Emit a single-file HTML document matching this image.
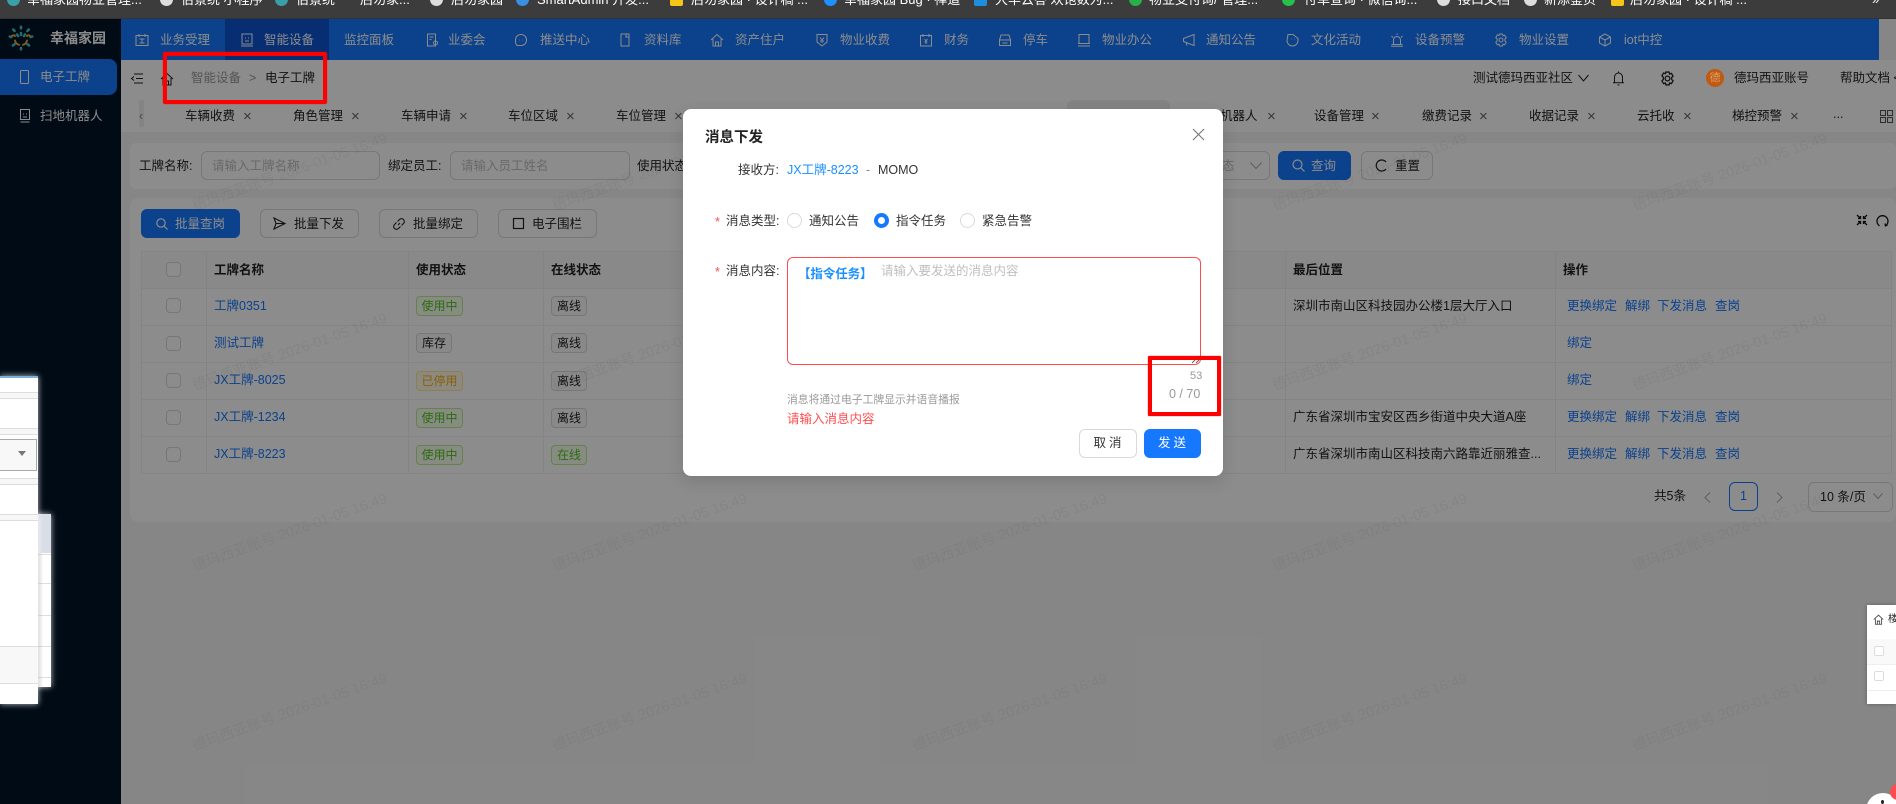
<!DOCTYPE html>
<html lang="zh-CN">
<head>
<meta charset="utf-8">
<title>消息下发</title>
<style>
html,body{margin:0;padding:0;width:1896px;height:804px;overflow:hidden;background:#f5f5f5}
body{position:relative;font-family:"Liberation Sans","Noto Sans CJK SC",sans-serif;font-size:12.5px;color:rgba(0,0,0,.88);filter:blur(.3px)}
.a,.t{position:absolute}
.t{white-space:nowrap;line-height:20px;height:20px}
svg{position:absolute;overflow:visible;fill:none}
.nav .t{color:#fff;top:30px}
.nav svg{top:33px;width:14px;height:14px;stroke:#fff;stroke-width:1}
.bm .t{color:#fff;top:-10px;font-size:13px}
.bm i{position:absolute;top:-7px;width:13px;height:13px;border-radius:50%;background:#ddd}
.tab .t{top:106px;color:rgba(0,0,0,.88)}
.tab .x{color:#666;font-size:15px;top:107px}
.btn{position:absolute;box-sizing:border-box;border:1px solid #d9d9d9;border-radius:6px;background:#fff}
.pri{background:#1677ff;border-color:#1677ff}
.inp{position:absolute;box-sizing:border-box;border:1px solid #d9d9d9;border-radius:6px;background:#fff;top:151px;height:29px}
.hl{position:absolute;left:141px;width:1750px;height:1px;background:#f0f0f0}
.vl{position:absolute;top:251px;height:222px;width:1px;background:#f0f0f0}
.cb{position:absolute;left:166px;width:13px;height:13px;border:1px solid #d9d9d9;border-radius:4px;background:#fff}
.link{color:#1677ff}
.tag{position:absolute;box-sizing:border-box;height:20px;line-height:18px;border:1px solid #d9d9d9;background:#fafafa;border-radius:4px;text-align:center;font-size:12px;color:rgba(0,0,0,.88)}
.g{background:#f6ffed;border-color:#b7eb8f;color:#52c41a}
.o{background:#fffbe6;border-color:#ffe58f;color:#faad14}
.wm{position:absolute;white-space:nowrap;font-size:14.5px;line-height:18px;color:rgba(0,0,0,.055);transform-origin:0 50%;transform:rotate(-19.5deg)}
.b{font-weight:700}
.radio{position:absolute;box-sizing:border-box;top:213px;width:15px;height:15px;border:1px solid #d9d9d9;border-radius:50%;background:#fff}
</style>
</head>
<body>

<!-- bookmarks bar -->
<div class="a bm" style="left:0;top:0;width:1896px;height:18px;background:#3c3c3c;border-bottom:1px solid #333;overflow:hidden">
  <i style="left:7px;background:#3aa0a8"></i><div class="t" style="left:27px">幸福家园物业管理...</div>
  <i style="left:160px"></i><div class="t" style="left:181px">伯景统 小程序</div>
  <i style="left:275px;background:#3aa0a8"></i><div class="t" style="left:296px">伯景统</div>
  <div class="t" style="left:360px">后勿家...</div>
  <i style="left:430px"></i><div class="t" style="left:451px">后勿家园</div>
  <i style="left:516px;background:#3a8fe0"></i><div class="t" style="left:537px">SmartAdmin 开发...</div>
  <i style="left:670px;background:#f5c518;border-radius:2px"></i><div class="t" style="left:691px">后勿家园 · 设计稿 ...</div>
  <i style="left:824px;background:#1e90ff"></i><div class="t" style="left:844px">幸福家园 Bug · 禅道</div>
  <i style="left:974px;background:#1e8fe0;border-radius:2px"></i><div class="t" style="left:995px">大羊云答 欢饱数为...</div>
  <i style="left:1129px;background:#27b04a"></i><div class="t" style="left:1149px">物业支付询/ 管理...</div>
  <i style="left:1282px;background:#27c04a"></i><div class="t" style="left:1304px">付单查询 · 微信询...</div>
  <i style="left:1437px"></i><div class="t" style="left:1458px">接口文档</div>
  <i style="left:1524px"></i><div class="t" style="left:1544px">新添鉴页</div>
  <i style="left:1611px;background:#f5c518;border-radius:2px"></i><div class="t" style="left:1630px">后勿家园 · 设计稿 ...</div>
  <div class="t" style="left:1872px">»</div>
</div>

<!-- sidebar -->
<div class="a" style="left:0;top:19px;width:121px;height:785px;background:#001529"></div>
<svg style="left:8px;top:25px;width:26px;height:26px" viewBox="0 0 26 26">
  <g stroke="#3fc4c0" stroke-width="2.600" stroke-linecap="round">
    <path d="M13 1.800v1.500M5.200 4.500l1.400 1.400M20.800 4.500l-1.400 1.400M1.800 11.500l1.600.5M24.200 11.500l-1.600.5M5 20.500l1.500-1.300M21 20.500l-1.500-1.300M13 24.200v-1.200"/>
    <path d="M13 8v2M9 9.500l1 1.500M17 9.500l-1 1.500"/>
  </g>
  <path d="M7 15.500c.3 2 2 4 4 4.300M19 15.500c-.3 2-2 4-4 4.300M4 11c1-1 2-1 3 0M22 11c-1-1-2-1-3 0" stroke="#e8a040" stroke-width="2" stroke-linecap="round"/>
</svg>
<div class="t b" style="left:50px;top:28px;color:#fff;font-size:14px">幸福家园</div>
<div class="a" style="left:0;top:59px;width:117px;height:36px;background:#1677ff;border-radius:0 8px 8px 0"></div>
<svg style="left:20px;top:70px;width:9px;height:14px;stroke:#fff" viewBox="0 0 9 14"><rect x=".5" y=".5" width="8" height="13" rx="1"/></svg>
<div class="t" style="left:40px;top:67px;color:#fff">电子工牌</div>
<svg style="left:20px;top:109px;width:10px;height:14px;stroke:#fff" viewBox="0 0 10 14"><rect x=".5" y=".5" width="9" height="10"/><path d="M3 5h1M6 5h1M3 8h4M.5 13h9"/></svg>
<div class="t" style="left:40px;top:106px;color:#fff">扫地机器人</div>

<!-- top nav -->
<div class="nav">
  <div class="a" style="left:121px;top:19px;width:1758px;height:41px;background:#1677ff"></div>
  <div class="a" style="left:225px;top:19px;width:104px;height:41px;background:#0d54d1"></div>
  <svg style="left:135px" viewBox="0 0 14 14"><path d="M1 2.500h12v10H1zM4 1v3M10 1v3M4.500 6h5M7 6v4M4.500 10h5"/></svg>
  <div class="t" style="left:160px">业务受理</div>
  <svg style="left:240px" viewBox="0 0 14 14"><rect x="2" y="1" width="10" height="10"/><path d="M5 5h1M8 5h1M5 8h4M1 13h12"/></svg>
  <div class="t" style="left:264px">智能设备</div>
  <div class="t" style="left:344px">监控面板</div>
  <svg style="left:425px" viewBox="0 0 14 14"><rect x="2.500" y="1" width="8" height="12"/><path d="M4.500 4h4M4.500 6.500h2"/><circle cx="10.500" cy="10" r="2"/></svg>
  <div class="t" style="left:448px">业委会</div>
  <svg style="left:514px" viewBox="0 0 14 14"><path d="M7 1.500c3.500 0 5.500 2.500 5.500 5.500s-2 5.500-5.500 5.500H3l-1-1.500C1.500 10 1.500 8 1.500 7 1.500 4 3.500 1.500 7 1.500zM5 7h.5M8.500 7H9"/></svg>
  <div class="t" style="left:540px">推送中心</div>
  <svg style="left:618px" viewBox="0 0 14 14"><path d="M3 1h8v12H3zM8 1v3h3"/></svg>
  <div class="t" style="left:644px">资料库</div>
  <svg style="left:710px" viewBox="0 0 14 14"><path d="M1 7l6-5.500L13 7M3 6v7h8V6M5.500 13V9h3v4"/></svg>
  <div class="t" style="left:735px">资产住户</div>
  <svg style="left:815px" viewBox="0 0 14 14"><path d="M2 1.500h10V9l-5 4-5-4zM5 4.500l2 2.500 2-2.500M7 7v3M5 8h4"/></svg>
  <div class="t" style="left:840px">物业收费</div>
  <svg style="left:919px" viewBox="0 0 14 14"><rect x="1.500" y="2.500" width="11" height="10.500"/><path d="M4 1v3M10 1v3M5.500 6l1.500 2 1.500-2M7 8v3M5.500 9h3"/></svg>
  <div class="t" style="left:944px">财务</div>
  <svg style="left:998px" viewBox="0 0 14 14"><path d="M3 2h8l1.500 5v5.500h-11V7zM1.500 7h11M4.500 10h5"/></svg>
  <div class="t" style="left:1023px">停车</div>
  <svg style="left:1077px" viewBox="0 0 14 14"><rect x="2" y="1.500" width="10" height="9"/><path d="M1 13h12M1 10.500h12"/></svg>
  <div class="t" style="left:1102px">物业办公</div>
  <svg style="left:1182px" viewBox="0 0 14 14"><path d="M1.500 5.500L12 1.500v11L1.500 8.500zM4 9.500l1 3"/></svg>
  <div class="t" style="left:1206px">通知公告</div>
  <svg style="left:1285px" viewBox="0 0 14 14"><path d="M3 1.500h5l5 4v2c0 3-2.500 5.500-5.500 5.500S2 10.500 2 7.500zM6 6h.5M9 6h.5"/></svg>
  <div class="t" style="left:1311px">文化活动</div>
  <svg style="left:1390px" viewBox="0 0 14 14"><path d="M3.500 11V7a3.500 3.500 0 0 1 7 0v4M1.500 11.500h11M1 13.300h12M1.500 3l1.500 1.500M12.500 3L11 4.500M7 .5v1.500"/></svg>
  <div class="t" style="left:1415px">设备预警</div>
  <svg style="left:1494px" viewBox="0 0 14 14"><path d="M5.500 1h3l.5 1.800 1.700-.6 1.500 2.600-1.300 1.300v1.800l1.300 1.300-1.500 2.600-1.700-.6-.5 1.800h-3l-.5-1.800-1.700.6-1.500-2.600 1.300-1.300V5.800L1.800 4.500l1.500-2.600 1.700.6z"/><circle cx="7" cy="7" r="2"/></svg>
  <div class="t" style="left:1519px">物业设置</div>
  <svg style="left:1598px" viewBox="0 0 14 14"><path d="M7 1l5.500 3v6L7 13l-5.500-3V4zM1.500 4L7 7l5.500-3M7 7v6"/></svg>
  <div class="t" style="left:1624px">iot中控</div>
</div>

<!-- breadcrumb bar -->
<div class="a" style="left:121px;top:60px;width:1775px;height:36px;background:#fff;border-bottom:1px solid #f0f0f0"></div>
<svg style="left:131px;top:73px;width:12px;height:11px;stroke:#222" viewBox="0 0 12 11"><path d="M3 1h9M5 5.500h7M3 10h9M3 3.500L.5 5.500 3 7.500"/></svg>
<svg style="left:160px;top:72px;width:14px;height:14px;stroke:#222" viewBox="0 0 14 14"><path d="M1 7l6-5.500L13 7M3 6v7h8V6M5.500 13V9h3v4"/></svg>
<div class="t" style="left:191px;top:68px;color:#999">智能设备</div>
<div class="t" style="left:249px;top:68px;color:#999">&gt;</div>
<div class="t" style="left:265px;top:68px;color:#222">电子工牌</div>
<div class="t" style="left:1473px;top:68px">测试德玛西亚社区</div>
<svg style="left:1578px;top:74px;width:11px;height:8px;stroke:#222" viewBox="0 0 11 8"><path d="M.5 1l5 6 5-6"/></svg>
<svg style="left:1612px;top:71px;width:13px;height:15px;stroke:#222" viewBox="0 0 13 15"><path d="M2.500 11.500V6a4 4 0 0 1 8 0v5.500M1 11.800h11M5.500 14h2M6.500 2V.5"/></svg>
<svg style="left:1660px;top:71px;width:15px;height:15px;stroke:#222;stroke-width:1.200" viewBox="0 0 14 14"><path d="M5.500 1h3l.5 1.800 1.700-.6 1.500 2.600-1.300 1.300v1.800l1.300 1.300-1.500 2.600-1.700-.6-.5 1.800h-3l-.5-1.800-1.700.6-1.500-2.600 1.300-1.300V5.800L1.800 4.500l1.500-2.600 1.700.6z"/><circle cx="7" cy="7" r="2.200"/></svg>
<div class="t" style="left:1734px;top:68px">德玛西亚账号</div>
<div class="t" style="left:1840px;top:68px;width:56px;overflow:hidden">帮助文档 &lt;</div>

<!-- tabs -->
<div class="a" style="left:121px;top:96px;width:1775px;height:36px;background:#fff"></div>
<div class="a" style="left:139px;top:100px;width:5px;height:27px;background:#f0f0f0"></div>
<div class="t" style="left:139px;top:106px;color:#888">‹</div>
<div class="a" style="left:1067px;top:100px;width:103px;height:32px;background:#efefef;border-radius:6px 6px 0 0"></div>
<div class="tab">
  <div class="t" style="left:185px">车辆收费</div><div class="t x" style="left:243px">×</div>
  <div class="t" style="left:293px">角色管理</div><div class="t x" style="left:351px">×</div>
  <div class="t" style="left:401px">车辆申请</div><div class="t x" style="left:459px">×</div>
  <div class="t" style="left:508px">车位区域</div><div class="t x" style="left:566px">×</div>
  <div class="t" style="left:616px">车位管理</div><div class="t x" style="left:674px">×</div>
  <div class="t" style="left:1220px">机器人</div><div class="t x" style="left:1267px">×</div>
  <div class="t" style="left:1314px">设备管理</div><div class="t x" style="left:1371px">×</div>
  <div class="t" style="left:1422px">缴费记录</div><div class="t x" style="left:1479px">×</div>
  <div class="t" style="left:1529px">收据记录</div><div class="t x" style="left:1587px">×</div>
  <div class="t" style="left:1637px">云托收</div><div class="t x" style="left:1683px">×</div>
  <div class="t" style="left:1732px">梯控预警</div><div class="t x" style="left:1790px">×</div>
  <div class="t" style="left:1833px;top:104px">...</div>
</div>
<svg style="left:1880px;top:110px;width:13px;height:13px;stroke:#555" viewBox="0 0 13 13"><rect x=".5" y=".5" width="5" height="5"/><rect x="7.500" y=".5" width="5" height="5"/><rect x=".5" y="7.500" width="5" height="5"/><rect x="7.500" y="7.500" width="5" height="5"/></svg>

<!-- search card -->
<div class="a" style="left:130px;top:143px;width:1766px;height:46px;background:#fff;border-radius:6px"></div>
<div class="t" style="left:139px;top:156px">工牌名称:</div>
<div class="inp" style="left:201px;width:179px"></div>
<div class="t" style="left:212px;top:156px;color:#bfbfbf">请输入工牌名称</div>
<div class="t" style="left:388px;top:156px">绑定员工:</div>
<div class="inp" style="left:450px;width:180px"></div>
<div class="t" style="left:461px;top:156px;color:#bfbfbf">请输入员工姓名</div>
<div class="t" style="left:637px;top:156px">使用状态:</div>
<div class="inp" style="left:1000px;width:270px"></div>
<div class="t" style="left:1222px;top:156px;color:#bfbfbf">态</div>
<svg style="left:1250px;top:162px;width:12px;height:7px;stroke:#aaa" viewBox="0 0 12 7"><path d="M.5.5L6 6.500 11.500.5"/></svg>
<div class="btn pri" style="left:1278px;top:151px;width:73px;height:29px"></div>
<svg style="left:1292px;top:159px;width:13px;height:13px;stroke:#fff;stroke-width:1.200" viewBox="0 0 13 13"><circle cx="5.500" cy="5.500" r="4.500"/><path d="M9 9l3.500 3.500"/></svg>
<div class="t" style="left:1311px;top:156px;color:#fff">查询</div>
<div class="btn" style="left:1361px;top:151px;width:72px;height:29px"></div>
<svg style="left:1375px;top:159px;width:12px;height:13px;stroke:#222;stroke-width:1.200" viewBox="0 0 12 13"><path d="M11 3a5.500 5.500 0 1 0 0 7"/></svg>
<div class="t" style="left:1395px;top:156px">重置</div>

<!-- table card -->
<div class="a" style="left:130px;top:198px;width:1766px;height:324px;background:#fff;border-radius:8px"></div>
<div class="btn pri" style="left:141px;top:209px;width:99px;height:29px"></div>
<svg style="left:156px;top:218px;width:12px;height:12px;stroke:#fff;stroke-width:1.200" viewBox="0 0 12 12"><circle cx="5" cy="5" r="4.200"/><path d="M8 8l3.500 3.500"/></svg>
<div class="t" style="left:175px;top:214px;color:#fff">批量查岗</div>
<div class="btn" style="left:260px;top:209px;width:99px;height:29px"></div>
<svg style="left:273px;top:217px;width:13px;height:13px;stroke:#222;stroke-width:1.100" viewBox="0 0 13 13"><path d="M1 1l11 5.500L1 12l2-5.500zM3 6.500h9"/></svg>
<div class="t" style="left:294px;top:214px">批量下发</div>
<div class="btn" style="left:379px;top:209px;width:99px;height:29px"></div>
<svg style="left:393px;top:218px;width:12px;height:12px;stroke:#222;stroke-width:1.100" viewBox="0 0 12 12"><path d="M5 7l2-2M4.500 3.500l2-2a2.500 2.500 0 0 1 4 4l-2 2M7.500 8.500l-2 2a2.500 2.500 0 0 1-4-4l2-2"/></svg>
<div class="t" style="left:413px;top:214px">批量绑定</div>
<div class="btn" style="left:498px;top:209px;width:99px;height:29px"></div>
<svg style="left:513px;top:218px;width:11px;height:11px;stroke:#222;stroke-width:1.200" viewBox="0 0 11 11"><rect x=".5" y=".5" width="10" height="10"/></svg>
<div class="t" style="left:532px;top:214px">电子围栏</div>
<svg style="left:1856px;top:214px;width:12px;height:12px;stroke:#111;stroke-width:1.300" viewBox="0 0 12 12"><path d="M1 1l3 3M11 1L8 4M1 11l3-3M11 11L8 8M4.500 2v2.500H2M7.500 2v2.500H10M4.500 10V7.500H2M7.500 10V7.500H10"/></svg>
<svg style="left:1876px;top:214px;width:13px;height:13px;stroke:#111;stroke-width:1.300" viewBox="0 0 13 13"><path d="M3.500 11.800A5.500 5.500 0 1 1 9.500 11.800M9 9.500l.5 2.300 2-.8"/></svg>

<!-- table -->
<div class="a" style="left:141px;top:251px;width:1750px;height:37px;background:#fafafa;border-radius:8px 8px 0 0"></div>
<div class="hl" style="top:251px"></div><div class="hl" style="top:288px"></div><div class="hl" style="top:325px"></div><div class="hl" style="top:362px"></div><div class="hl" style="top:399px"></div><div class="hl" style="top:436px"></div><div class="hl" style="top:473px"></div>
<div class="vl" style="left:141px"></div><div class="vl" style="left:206px"></div><div class="vl" style="left:408px"></div><div class="vl" style="left:543px"></div><div class="vl" style="left:1285px"></div><div class="vl" style="left:1555px"></div><div class="vl" style="left:1891px"></div>
<div class="cb" style="top:262px"></div><div class="cb" style="top:298px"></div><div class="cb" style="top:336px"></div><div class="cb" style="top:373px"></div><div class="cb" style="top:410px"></div><div class="cb" style="top:447px"></div>
<div class="t b" style="left:214px;top:260px">工牌名称</div>
<div class="t b" style="left:416px;top:260px">使用状态</div>
<div class="t b" style="left:551px;top:260px">在线状态</div>
<div class="t b" style="left:1293px;top:260px">最后位置</div>
<div class="t b" style="left:1563px;top:260px">操作</div>

<div class="t link" style="left:214px;top:296px">工牌0351</div>
<div class="t link" style="left:214px;top:333px">测试工牌</div>
<div class="t link" style="left:214px;top:370px">JX工牌-8025</div>
<div class="t link" style="left:214px;top:407px">JX工牌-1234</div>
<div class="t link" style="left:214px;top:444px">JX工牌-8223</div>

<div class="tag g" style="left:416px;top:296px;width:47px">使用中</div>
<div class="tag" style="left:416px;top:333px;width:36px">库存</div>
<div class="tag o" style="left:416px;top:371px;width:47px">已停用</div>
<div class="tag g" style="left:416px;top:408px;width:47px">使用中</div>
<div class="tag g" style="left:416px;top:445px;width:47px">使用中</div>

<div class="tag" style="left:551px;top:296px;width:36px">离线</div>
<div class="tag" style="left:551px;top:333px;width:36px">离线</div>
<div class="tag" style="left:551px;top:371px;width:36px">离线</div>
<div class="tag" style="left:551px;top:408px;width:36px">离线</div>
<div class="tag g" style="left:551px;top:445px;width:36px">在线</div>

<div class="t" style="left:1293px;top:296px">深圳市南山区科技园办公楼1层大厅入口</div>
<div class="t" style="left:1293px;top:407px">广东省深圳市宝安区西乡街道中央大道A座</div>
<div class="t" style="left:1293px;top:444px">广东省深圳市南山区科技南六路靠近丽雅查...</div>

<div class="t link" style="left:1567px;top:296px">更换绑定</div><div class="t link" style="left:1625px;top:296px">解绑</div><div class="t link" style="left:1657px;top:296px">下发消息</div><div class="t link" style="left:1715px;top:296px">查岗</div>
<div class="t link" style="left:1567px;top:333px">绑定</div>
<div class="t link" style="left:1567px;top:370px">绑定</div>
<div class="t link" style="left:1567px;top:407px">更换绑定</div><div class="t link" style="left:1625px;top:407px">解绑</div><div class="t link" style="left:1657px;top:407px">下发消息</div><div class="t link" style="left:1715px;top:407px">查岗</div>
<div class="t link" style="left:1567px;top:444px">更换绑定</div><div class="t link" style="left:1625px;top:444px">解绑</div><div class="t link" style="left:1657px;top:444px">下发消息</div><div class="t link" style="left:1715px;top:444px">查岗</div>

<!-- pagination -->
<div class="t" style="left:1654px;top:486px">共5条</div>
<svg style="left:1704px;top:492px;width:7px;height:11px;stroke:#aaa" viewBox="0 0 7 11"><path d="M6 .5L1 5.500l5 5"/></svg>
<div class="a" style="left:1729px;top:482px;width:27px;height:27px;border:1px solid #1677ff;border-radius:6px;color:#1677ff;text-align:center;line-height:27px">1</div>
<svg style="left:1776px;top:492px;width:7px;height:11px;stroke:#aaa" viewBox="0 0 7 11"><path d="M1 .5l5 5-5 5"/></svg>
<div class="a" style="left:1808px;top:482px;width:83px;height:28px;border:1px solid #d9d9d9;border-radius:6px;background:#fff"></div>
<div class="t" style="left:1820px;top:487px">10 条/页</div>
<svg style="left:1873px;top:493px;width:10px;height:6px;stroke:#aaa" viewBox="0 0 10 6"><path d="M.5.500L5 5.500 9.500.5"/></svg>

<!-- watermarks -->
<div class="wm" style="left:193px;top:198px">德玛西亚账号 2026-01-05 16:49</div>
<div class="wm" style="left:553px;top:198px">德玛西亚账号 2026-01-05 16:49</div>
<div class="wm" style="left:913px;top:198px">德玛西亚账号 2026-01-05 16:49</div>
<div class="wm" style="left:1273px;top:198px">德玛西亚账号 2026-01-05 16:49</div>
<div class="wm" style="left:1633px;top:198px">德玛西亚账号 2026-01-05 16:49</div>
<div class="wm" style="left:193px;top:378px">德玛西亚账号 2026-01-05 16:49</div>
<div class="wm" style="left:553px;top:378px">德玛西亚账号 2026-01-05 16:49</div>
<div class="wm" style="left:913px;top:378px">德玛西亚账号 2026-01-05 16:49</div>
<div class="wm" style="left:1273px;top:378px">德玛西亚账号 2026-01-05 16:49</div>
<div class="wm" style="left:1633px;top:378px">德玛西亚账号 2026-01-05 16:49</div>
<div class="wm" style="left:193px;top:558px">德玛西亚账号 2026-01-05 16:49</div>
<div class="wm" style="left:553px;top:558px">德玛西亚账号 2026-01-05 16:49</div>
<div class="wm" style="left:913px;top:558px">德玛西亚账号 2026-01-05 16:49</div>
<div class="wm" style="left:1273px;top:558px">德玛西亚账号 2026-01-05 16:49</div>
<div class="wm" style="left:1633px;top:558px">德玛西亚账号 2026-01-05 16:49</div>
<div class="wm" style="left:193px;top:738px">德玛西亚账号 2026-01-05 16:49</div>
<div class="wm" style="left:553px;top:738px">德玛西亚账号 2026-01-05 16:49</div>
<div class="wm" style="left:913px;top:738px">德玛西亚账号 2026-01-05 16:49</div>
<div class="wm" style="left:1273px;top:738px">德玛西亚账号 2026-01-05 16:49</div>
<div class="wm" style="left:1633px;top:738px">德玛西亚账号 2026-01-05 16:49</div>

<!-- modal mask -->
<div class="a" style="left:0;top:19px;width:1896px;height:785px;background:rgba(0,0,0,.45)"></div>

<!-- avatar keeps its saturated tone over the mask -->
<div class="a" style="left:1706px;top:69px;width:18px;height:18px;border-radius:50%;background:#bf5a10;color:#d9a070;font-size:11px;line-height:18px;text-align:center">德</div>

<!-- red annotation 1 -->
<div class="a" style="left:163px;top:52px;width:156px;height:44px;border:4px solid #f00;border-radius:2px;box-shadow:0 0 1px #f00"></div>

<!-- modal -->
<div class="a" style="left:683px;top:109px;width:540px;height:367px;background:#fff;border-radius:8px;box-shadow:0 6px 16px rgba(0,0,0,.12)"></div>
<div class="t b" style="left:705px;top:128px;font-size:14.5px;color:#222">消息下发</div>
<svg style="left:1192px;top:128px;width:13px;height:13px;stroke:#777;stroke-width:1.100" viewBox="0 0 13 13"><path d="M1 1l11 11M12 1L1 12"/></svg>
<div class="t" style="left:738px;top:160px;color:#333">接收方:</div>
<div class="t" style="left:787px;top:160px;color:#1890ff">JX工牌-8223</div>
<div class="t" style="left:866px;top:160px;color:#888">-</div>
<div class="t" style="left:878px;top:160px;color:#333">MOMO</div>

<div class="t" style="left:715px;top:212px;color:#ff4d4f">*</div>
<div class="t" style="left:726px;top:211px;color:#333">消息类型:</div>
<div class="radio" style="left:787px"></div>
<div class="t" style="left:809px;top:211px;color:#333">通知公告</div>
<div class="radio" style="left:874px;border:4.500px solid #1677ff"></div>
<div class="t" style="left:896px;top:211px;color:#333">指令任务</div>
<div class="radio" style="left:960px"></div>
<div class="t" style="left:982px;top:211px;color:#333">紧急告警</div>

<div class="t" style="left:715px;top:262px;color:#ff4d4f">*</div>
<div class="t" style="left:726px;top:261px;color:#333">消息内容:</div>
<div class="a" style="left:787px;top:257px;width:412px;height:106px;border:1px solid #ff4d4f;border-radius:6px"></div>
<div class="t" style="left:798px;top:264px;color:#1890ff;font-weight:600;letter-spacing:-.1px">【指令任务】</div>
<div class="t" style="left:881px;top:261px;color:#bfbfbf">请输入要发送的消息内容</div>
<svg style="left:1191px;top:355px;width:9px;height:9px;stroke:#666" viewBox="0 0 9 9"><path d="M1 8l7-7M5 8l3-3"/></svg>
<div class="t" style="left:1190px;top:366px;font-size:11px;color:#999">53</div>
<div class="t" style="left:1169px;top:384px;font-size:12.500px;color:#999">0 / 70</div>
<div class="t" style="left:787px;top:390px;font-size:10.800px;color:#999">消息将通过电子工牌显示并语音播报</div>
<div class="t" style="left:787px;top:409px;color:#ff4d4f">请输入消息内容</div>

<!-- red annotation 2 -->
<div class="a" style="left:1148px;top:356px;width:65px;height:52px;border:4px solid #f00;border-radius:1px;box-shadow:0 0 1px #f00"></div>

<div class="btn" style="left:1079px;top:429px;width:58px;height:29px;text-align:center;line-height:27px;color:#333;letter-spacing:3px;text-indent:2px">取消</div>
<div class="btn pri" style="left:1144px;top:429px;width:57px;height:29px;text-align:center;line-height:27px;color:#fff;letter-spacing:3px;text-indent:2px">发送</div>

<!-- left overlapping windows -->
<div class="a" style="left:0;top:514px;width:51px;height:173px;background:#fff;box-shadow:0 0 6px rgba(255,255,255,.75);overflow:hidden">
  <div class="a" style="left:38px;top:0;width:13px;height:39px;background:#d8dde6"></div>
  <div class="a" style="left:38px;top:40px;width:13px;height:1px;background:#ddd"></div>
  <div class="a" style="left:38px;top:69px;width:13px;height:1px;background:#ddd"></div>
  <div class="a" style="left:38px;top:101px;width:13px;height:1px;background:#ddd"></div>
  <div class="a" style="left:38px;top:132px;width:13px;height:1px;background:#ddd"></div>
  <div class="a" style="left:38px;top:163px;width:13px;height:1px;background:#ddd"></div>
  <div class="a" style="left:38px;top:39px;width:5px;height:134px;background:linear-gradient(90deg,rgba(0,0,0,.18),rgba(0,0,0,0))"></div>
</div>
<div class="a" style="left:0;top:376px;width:38px;height:328px;background:#fff;box-shadow:0 0 6px rgba(255,255,255,.75);overflow:hidden">
  <div class="a" style="left:0;top:0;width:38px;height:2px;background:#7ab0dc"></div>
  <div class="a" style="left:0;top:16px;width:38px;height:5px;background:#f7f7f7;border-top:1px solid #ddd;border-bottom:1px solid #ddd"></div>
  <div class="a" style="left:0;top:52px;width:38px;height:5px;background:#f7f7f7;border-top:1px solid #ddd;border-bottom:1px solid #ddd"></div>
  <div class="a" style="left:-2px;top:63px;width:37px;height:30px;background:#f8f8f8;border:1px solid #aaa"></div>
  <div class="a" style="left:18px;top:75px;width:0;height:0;border:4px solid transparent;border-top:5px solid #777"></div>
  <div class="a" style="left:0;top:102px;width:38px;height:5px;background:#f7f7f7;border-top:1px solid #ddd;border-bottom:1px solid #ddd"></div>
  <div class="a" style="left:0;top:138px;width:38px;height:5px;background:#f7f7f7;border-top:1px solid #ddd;border-bottom:1px solid #ddd"></div>
  <div class="a" style="left:0;top:270px;width:38px;height:36px;background:#f8f8f8;border-top:1px solid #ddd;border-bottom:1px solid #ddd"></div>
</div>

<!-- right overlapping window -->
<div class="a" style="left:1867px;top:605px;width:29px;height:99px;background:#fff;box-shadow:0 0 4px rgba(0,0,0,.3);overflow:hidden">
  <svg style="left:6px;top:9px;width:11px;height:11px;stroke:#333" viewBox="0 0 14 14"><path d="M1 7l6-5.500L13 7M3 6v7h8V6M5.500 13V9h3v4"/></svg>
  <div class="t" style="left:21px;top:5px;font-size:10px">楼</div>
  <div class="a" style="left:0;top:34px;width:29px;height:25px;background:#f9f9f9;border-bottom:1px solid #eee"></div>
  <div class="a" style="left:7px;top:41px;width:8px;height:8px;border:1px solid #ddd;border-radius:2px;background:#fff"></div>
  <div class="a" style="left:0;top:60px;width:29px;height:25px;border-bottom:1px solid #eee"></div>
  <div class="a" style="left:7px;top:66px;width:8px;height:8px;border:1px solid #ddd;border-radius:2px;background:#fff"></div>
</div>
<div class="a" style="left:1866px;top:793px;width:34px;height:34px;border-radius:50%;background:#fff"></div>
<div class="a" style="left:1881px;top:800px;width:3px;height:4px;background:#222;border-radius:50%"></div>
<div class="a" style="left:1890px;top:784px;width:16px;height:16px;border-radius:50%;background:#ff4d4f"></div>

</body>
</html>
